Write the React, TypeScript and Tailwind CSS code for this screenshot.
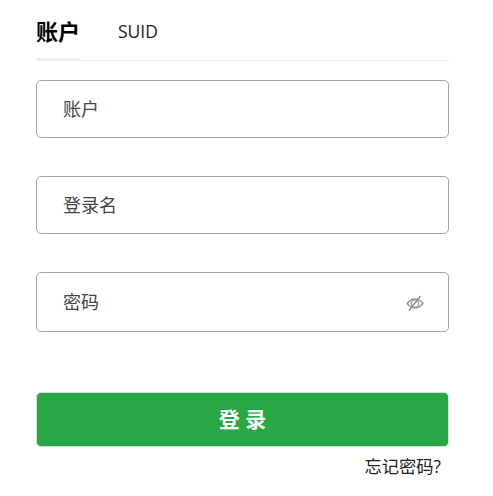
const font = "[font-family:'Open_Sans','Noto_Sans_CJK_SC',sans-serif]"

function EyeOff() {
  return (
    <svg width="18" height="16" viewBox="0 0 18 16" fill="none" stroke="#999" strokeWidth="1.5" className="mt-[1px]">
      <path d="M1 8.500C3.500 5.500 6 4 9 4s5.500 1.500 8 4.500c-2.500 3-5 4.500-8 4.500s-5.500-1.500-8-4.500z" />
      <circle cx="9" cy="8.500" r="3.700" strokeWidth="1.200" />
      <path d="M14.500 1 3 15.500" stroke="#8f8f8f" />
    </svg>
  )
}

function Field({ label, icon, height }: { label: string; icon?: boolean; height: string }) {
  return (
    <div className={`flex items-center justify-between rounded-[5px] border border-[#a3a3a3] pl-[26px] pr-[24px] ${height}`}>
      <span className={`text-[18px] text-[#444] ${icon ? "pt-[1px]" : ""}`}>{label}</span>
      {icon && <EyeOff />}
    </div>
  )
}

export default function App() {
  return (
    <div className={`h-[496px] w-[493px] bg-white pl-9 pr-11 text-[#222] ${font}`}>
      {/* Tabs */}
      <div className="flex h-[61px] border-b border-[#eeeeee]">
        <div className="flex h-[61px] w-[43px] items-start whitespace-nowrap border-b-[3px] border-[#eeeeee] pt-[15px] text-[22px] font-bold leading-[32px] text-black">
          账户
        </div>
        <div className="ml-[39px] pt-[15px] text-[17.500px] leading-[32px]">SUID</div>
      </div>

      <div className="mt-[19px] flex flex-col gap-[38px]">
        <Field label="账户" height="h-[58px]" />
        <Field label="登录名" height="h-[58px]" />
        <Field label="密码" icon height="h-[60px]" />
      </div>

      <button className="mt-[60px] flex h-[55px] w-full items-center justify-center rounded-[5px] border border-[#dddddd] bg-[#28a745] text-[21px] font-bold text-white">
        登 录
      </button>

      <div className="mt-[8px] pr-[8px] text-right text-[17.250px] leading-[24px] text-[#222]">忘记密码?</div>
    </div>
  )
}
